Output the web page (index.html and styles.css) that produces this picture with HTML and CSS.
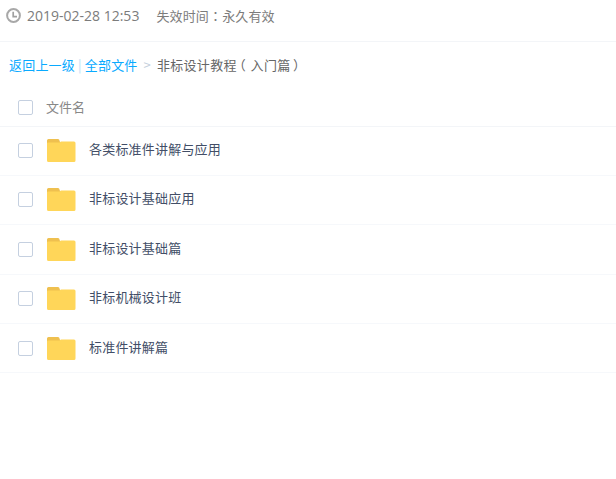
FILE: index.html
```html
<!DOCTYPE html>
<html lang="zh-CN">
<head>
<meta charset="utf-8">
<title>非标设计教程（入门篇）</title>
<link rel="stylesheet" href="styles.css">
</head>
<body>
<div class="meta">
  <svg class="clock" width="16" height="16" viewBox="0 0 16 16"><circle cx="7.500" cy="7.500" r="6.400" fill="none" stroke="#a8a8a8" stroke-width="2"/><path d="M7.200 3.800V8.700H11" fill="none" stroke="#a0a0a0" stroke-width="1.700"/></svg>
  <span class="date">2019-02-28 12:53</span>
  <span class="expire">失效时间<span class="colon" lang="zh-Hant">：</span>永久有效</span>
</div>
<div class="crumbs">
  <a class="link">返回上一级</a><span class="sep">|</span><a class="link">全部文件</a><span class="arrow">&gt;</span><span class="current">非标设计教程<span class="paren-open">（</span>入门篇<span class="paren-close">）</span></span>
</div>
<div class="head-row">
  <span class="check"></span>
  <span class="head-name">文件名</span>
</div>
<div class="row"><span class="check"></span><svg class="folder" width="30" height="25" viewBox="0 0 30 25"><use href="#f"/></svg><span class="name">各类标准件讲解与应用</span></div>
<div class="row"><span class="check"></span><svg class="folder" width="30" height="25" viewBox="0 0 30 25"><use href="#f"/></svg><span class="name">非标设计基础应用</span></div>
<div class="row"><span class="check"></span><svg class="folder" width="30" height="25" viewBox="0 0 30 25"><use href="#f"/></svg><span class="name">非标设计基础篇</span></div>
<div class="row"><span class="check"></span><svg class="folder" width="30" height="25" viewBox="0 0 30 25"><use href="#f"/></svg><span class="name">非标机械设计班</span></div>
<div class="row"><span class="check"></span><svg class="folder" width="30" height="25" viewBox="0 0 30 25"><use href="#f"/></svg><span class="name">标准件讲解篇</span></div>
<svg class="defs" width="0" height="0"><defs><g id="f"><path d="M1 8V2.500A1.500 1.500 0 0 1 2.500 1H12a1.500 1.500 0 0 1 1.500 1.500L14 4V8Z" fill="#efc04f"/><path d="M1 5.500A1 1 0 0 1 2 4.500H13.500L15 3.500H28A1.500 1.500 0 0 1 29.500 5V22.500A1.500 1.500 0 0 1 28 24H2.500A1.500 1.500 0 0 1 1 22.500Z" fill="#ffd659"/></g></defs></svg>
</body>
</html>
```
FILE: styles.css
```css
* { box-sizing: border-box; }
html, body { margin: 0; padding: 0; background: #fff; }
body { font-family: "Noto Sans CJK SC", "Liberation Sans", sans-serif; font-size: 13px; color: #666; }
.meta { height: 42px; padding: 8px 0 0 6px; border-bottom: 1px solid #f3f5f8; display: flex; align-items: flex-start; line-height: 15px; color: #7c7c7c; }
.clock { margin-right: 5px; flex: none; }
.date { font-family: "Open Sans", "Liberation Sans", sans-serif; font-size: 14px; margin-right: 17px; }
.expire { letter-spacing: 0.15px; }
.colon { font-family: "Noto Sans CJK TC", sans-serif; }
.crumbs { height: 44px; padding: 13px 0 0 9px; line-height: 19px; display: flex; letter-spacing: 0.2px; }
.link { color: #09aaff; }
.sep { color: #b8dcf5; margin: 0 3px; }
.arrow { color: #c5d0dc; margin: 0 6px; }
.current { color: #666; letter-spacing: 0.3px; }
.paren-open, .paren-close { font-feature-settings: "palt"; }
.paren-open { padding: 0 5px 0 2px; }
.paren-close { padding: 0 2px 0 3px; }
.head-row { height: 40.5px; padding: 3px 0 0 18px; display: flex; align-items: center; border-bottom: 1px solid #f3f5f8; color: #888; }
.check { width: 15px; height: 15px; border: 1px solid #c5d0e0; border-radius: 2px; flex: none; background: #fff; }
.head-name { margin: 0 0 2px 13px; }
.row { height: 49.4px; display: flex; align-items: center; padding: 0 0 0.4px 18px; border-bottom: 1px solid #f6f8fb; }
.folder { margin-left: 13px; flex: none; }
.name { margin: 0 0 4px 13px; color: #424e67; letter-spacing: 0.2px; }
.defs { position: absolute; }
```
